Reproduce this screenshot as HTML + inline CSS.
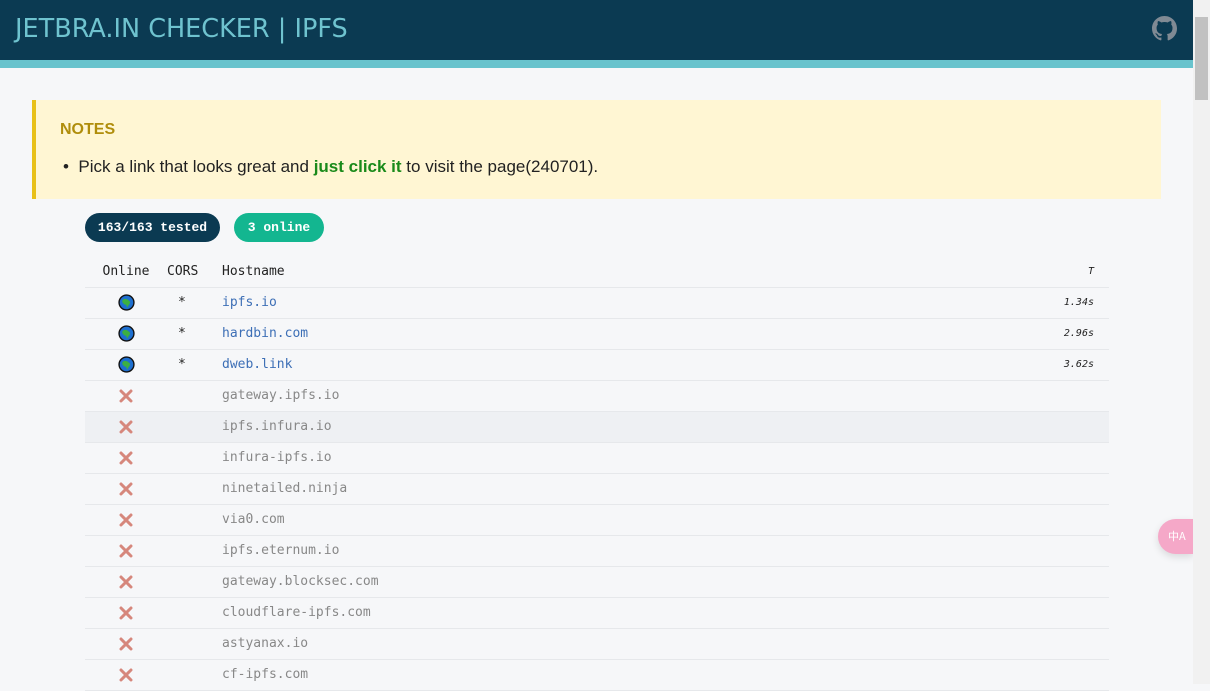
<!DOCTYPE html>
<html><head><meta charset="utf-8"><style>
*{box-sizing:border-box;margin:0;padding:0}
body{width:1210px;height:684px;overflow:hidden;background:#f6f7f9;font-family:"Liberation Sans",sans-serif;position:relative}
.hdr{position:absolute;left:0;top:0;width:1193px;height:60px;background:#0b3a52}
.hdr h1{position:absolute;left:15px;top:14px;font-weight:normal;font-size:25.5px;color:#6fc3cf;font-family:"DejaVu Sans","Liberation Sans",sans-serif}
.bar{position:absolute;left:0;top:60px;width:1193px;height:8px;background:#68c3cd}
.gh{position:absolute;left:1152px;top:16px}
.sb{position:absolute;left:1193px;top:0;width:17px;height:684px;background:#f1f1f1}
.thumb{position:absolute;left:1195px;top:17px;width:13px;height:83px;background:#c1c1c1}
.notes{position:absolute;left:32px;top:100px;width:1129px;height:99px;background:#fff6d3;border-left:4px solid #e8c018}
.notes h3{position:absolute;left:24px;top:21px;font-size:16px;color:#b08d0b;font-weight:bold}
.notes p{position:absolute;left:27px;top:57px;font-size:17px;color:#222}
.notes b{color:#1a8a1a}
.pill{position:absolute;top:213px;height:29px;border-radius:15px;color:#fff;font:bold 13px "Liberation Mono",monospace;line-height:29px;text-align:center}
table{position:absolute;left:85px;top:256px;width:1024px;border-collapse:collapse;table-layout:fixed;font:13px "DejaVu Sans Mono","Liberation Mono",monospace;color:#222}
td,th{height:31px;border-bottom:1px solid #e6e8eb;font-weight:normal;text-align:left}
.c1{width:82px;text-align:center}
.c2{width:55px;padding-left:11px}
th.c2{padding-left:0}
.t{width:100px;text-align:right;padding-right:15px;font-style:italic;font-size:10px}
a{color:#3d6fb6;text-decoration:none}
.off td{color:#888}
.hl{background:#eef0f3}
td.c1 svg{vertical-align:middle}
.tr{position:absolute;left:1158px;top:519px;width:35px;height:35px;border-radius:18px 0 0 18px;background:#f5a8c8;color:#fff;font:11px "Noto Sans CJK SC",sans-serif;line-height:35px;padding-left:10px;box-shadow:0 3px 8px rgba(0,0,0,.12)}
</style></head><body>
<svg width="0" height="0" style="position:absolute"><defs>
<symbol id="g" viewBox="0 0 16 16"><circle cx="8" cy="8" r="7" fill="#1e6fd0" stroke="#111" stroke-width="1.3"/><path d="M5 5c2-1 4 0 5 1s2 1 1 3-2 2-2 4c-1-1-1-3-2-3S4 8 4 7s0-1 1-2z" fill="#3cb043"/></symbol>
<symbol id="x" viewBox="0 0 16 16"><path d="M3 3L13 13M13 3L3 13" stroke="#d6877c" stroke-width="3" stroke-linecap="round"/></symbol>
</defs></svg>
<div class="hdr"><h1>JETBRA.IN CHECKER | IPFS</h1>
<svg class="gh" width="25" height="25" viewBox="0 0 16 16"><path fill="#808a94" d="M8 0C3.58 0 0 3.58 0 8c0 3.54 2.29 6.53 5.47 7.590.4.07.55-.17.55-.38 0-.19-.01-.82-.01-1.49-2.01.37-2.53-.49-2.69-.94-.09-.23-.48-.94-.82-1.13-.28-.15-.68-.52-.01-.53.63-.01 1.08.58 1.23.82.72 1.21 1.87.87 2.33.66.07-.52.28-.87.51-1.07-1.78-.2-3.64-.89-3.64-3.95 0-.87.31-1.59.82-2.15-.08-.2-.36-1.02.08-2.12 0 0 .67-.21 2.2.82.64-.18 1.32-.27 2-.27.68 0 1.36.09 2 .27 1.53-1.04 2.2-.82 2.2-.82.44 1.1.16 1.92.08 2.12.51.56.82 1.27.82 2.15 0 3.07-1.87 3.75-3.65 3.95.29.25.54.73.54 1.48 0 1.07-.01 1.93-.01 2.2 0 .21.15.46.55.38A8.013 8.013 0 0016 8c0-4.42-3.58-8-8-8z"/></svg></div>
<div class="bar"></div>
<div class="notes"><h3>NOTES</h3><p>•&nbsp;&nbsp;Pick a link that looks great and <b>just click it</b> to visit the page(240701).</p></div>
<div class="pill" style="left:85px;width:135px;background:#0b3a52">163/163 tested</div>
<div class="pill" style="left:234px;width:90px;background:#13b690">3 online</div>
<table>
<tr><th class="c1">Online</th><th class="c2">CORS</th><th>Hostname</th><th class="t">T</th></tr>
<tr><td class="c1"><svg width="17" height="17"><use href="#g"/></svg></td><td class="c2">*</td><td><a>ipfs.io</a></td><td class="t">1.34s</td></tr>
<tr><td class="c1"><svg width="17" height="17"><use href="#g"/></svg></td><td class="c2">*</td><td><a>hardbin.com</a></td><td class="t">2.96s</td></tr>
<tr><td class="c1"><svg width="17" height="17"><use href="#g"/></svg></td><td class="c2">*</td><td><a>dweb.link</a></td><td class="t">3.62s</td></tr>
<tr class="off"><td class="c1"><svg width="16" height="16"><use href="#x"/></svg></td><td></td><td>gateway.ipfs.io</td><td></td></tr>
<tr class="off hl"><td class="c1"><svg width="16" height="16"><use href="#x"/></svg></td><td></td><td>ipfs.infura.io</td><td></td></tr>
<tr class="off"><td class="c1"><svg width="16" height="16"><use href="#x"/></svg></td><td></td><td>infura-ipfs.io</td><td></td></tr>
<tr class="off"><td class="c1"><svg width="16" height="16"><use href="#x"/></svg></td><td></td><td>ninetailed.ninja</td><td></td></tr>
<tr class="off"><td class="c1"><svg width="16" height="16"><use href="#x"/></svg></td><td></td><td>via0.com</td><td></td></tr>
<tr class="off"><td class="c1"><svg width="16" height="16"><use href="#x"/></svg></td><td></td><td>ipfs.eternum.io</td><td></td></tr>
<tr class="off"><td class="c1"><svg width="16" height="16"><use href="#x"/></svg></td><td></td><td>gateway.blocksec.com</td><td></td></tr>
<tr class="off"><td class="c1"><svg width="16" height="16"><use href="#x"/></svg></td><td></td><td>cloudflare-ipfs.com</td><td></td></tr>
<tr class="off"><td class="c1"><svg width="16" height="16"><use href="#x"/></svg></td><td></td><td>astyanax.io</td><td></td></tr>
<tr class="off"><td class="c1"><svg width="16" height="16"><use href="#x"/></svg></td><td></td><td>cf-ipfs.com</td><td></td></tr>
</table>
<div class="tr">中A</div>
<div class="sb"></div><div class="thumb"></div>
</body></html>
